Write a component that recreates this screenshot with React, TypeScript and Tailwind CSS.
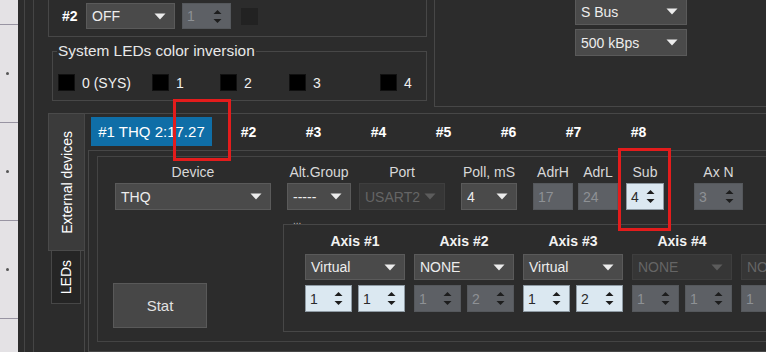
type BoxProps = { text: string; className?: string; off?: boolean };

const Tri = ({ dim }: { dim?: boolean }) => (
  <svg width="12" height="7" viewBox="0 0 12 7" className={dim ? "text-[#5c5c5c]" : "text-[#ececec]"}>
    <path d="M0.5 0.5h11L6 6.5z" fill="currentColor" />
  </svg>
);

// combo box with a down triangle
const Combo = ({ text, className = "", off }: BoxProps) => (
  <div
    className={`flex shrink-0 items-center justify-between overflow-hidden whitespace-nowrap border pl-[5px] pr-[8px] ${
      off ? "border-[#3e3e3e] bg-[#363636] text-[#656565]" : "border-[#5a5a5a] bg-[#4a4a4a] text-[#ededed]"
    } ${className}`}
  >
    <span>{text}</span>
    <Tri dim={off} />
  </div>
);

// spin box, light when enabled
const Spin = ({ text, className = "", off }: BoxProps) => (
  <div
    className={`flex shrink-0 items-center justify-between border pl-[4px] pr-[8px] ${
      off ? "border-[#55585c] bg-[#5d6065] text-[#8e9195]" : "border-[#8f9ba4] bg-[#dbe8f1] text-[#2b2b2b]"
    } ${className}`}
  >
    <span>{text}</span>
    <svg width="9" height="15" viewBox="0 0 9 15">
      <path d="M4.5 1L8.5 5H0.5z M0.5 10H8.5L4.5 14z" fill="#1d1d1d" />
    </svg>
  </div>
);

const Field = ({ label, children }: { label: string; children: React.ReactNode }) => (
  <div className="flex flex-col items-center">
    <span className="h-[16px] whitespace-nowrap text-[#d8d8d8]">{label}</span>
    <div className="mt-[3px]">{children}</div>
  </div>
);

const leds: [string, string][] = [
  ["0 (SYS)", "w-[94px]"],
  ["1", "w-[68px]"],
  ["2", "w-[69px]"],
  ["3", "w-[91px]"],
  ["4", ""],
];

const axes = [
  { name: "Axis #1", sel: "Virtual", a: "1", b: "1", on: true },
  { name: "Axis #2", sel: "NONE", a: "1", b: "2", on: false },
  { name: "Axis #3", sel: "Virtual", a: "1", b: "2", on: true },
  { name: "Axis #4", sel: "NONE", a: "1", b: "1", on: false, dis: true },
  { name: "Axis #5", sel: "NONE", a: "1", b: "1", on: false, dis: true },
];

export default function App() {
  return (
    <div className="relative flex h-[352px] w-[766px] overflow-hidden bg-[#2c2c2c] font-['Liberation_Sans',Arial,sans-serif] text-[14px] leading-[16px] text-[#e6e6e6]">
      {/* strip of the window behind */}
      <div className="flex w-[18px] shrink-0 flex-col bg-[#e4e2e5]">
        <div className="h-[25px] shrink-0 border-b border-[#9894a2]" />
        {[0, 1, 2].map((i) => (
          <div key={i} className="flex h-[98px] shrink-0 items-center border-b border-[#9894a2] pl-[6px]">
            <div className="size-[3px] rounded-full bg-[#555]" />
          </div>
        ))}
      </div>

      <div className="ml-[6px] flex flex-1 border-l border-[#454545] pl-[8px]">
        <div className="flex flex-1 flex-col border-l border-[#454545] pl-[14px]">
          {/* top groups */}
          <div className="flex h-[107px] shrink-0 items-start">
            <div className="w-[379px] shrink-0">
              <div className="h-[37px] border-x border-b border-[#474747] pl-[13px] pt-[3px]">
                <div className="flex h-[26px] items-center">
                  <span className="w-[24px] font-bold text-white">#2</span>
                  <Combo text="OFF" className="h-[26px] w-[89px]" />
                  <Spin text="1" off className="ml-[7px] h-[26px] w-[49px]" />
                  <div className="ml-[10px] size-[17px] bg-[#222]" />
                </div>
              </div>
              <fieldset className="ml-[4px] mt-[6px] border border-[#474747] pb-[9px] pl-[5px]">
                <legend className="-ml-[1px] px-[1px] text-[15.4px] leading-[16px] text-[#e8e8e8]">
                  System LEDs color inversion
                </legend>
                <div className="flex items-center pt-[15px]">
                  {leds.map(([t, w]) => (
                    <div key={t} className={`flex items-center gap-[7px] ${w}`}>
                      <div className="size-[17px] border border-[#111] bg-black" />
                      <span className="text-[#f0f0f0]">{t}</span>
                    </div>
                  ))}
                </div>
              </fieldset>
            </div>
            <div className="ml-[7px] h-[107px] flex-1 border-b border-l border-[#474747] pl-[140px]">
              <div className="-mt-[2px] flex w-[112px] flex-col gap-[4px]">
                <Combo text="S Bus" className="h-[27px] w-[112px]" />
                <Combo text="500 kBps" className="h-[27px] w-[112px]" />
              </div>
            </div>
          </div>

          {/* tab widget */}
          <div className="mt-[6px] flex flex-1">
            <div className="flex w-[36px] shrink-0 flex-col">
              <div className="flex h-[138px] items-center justify-center border border-r-0 border-[#4a4a4a] bg-[#3b3b3b]">
                <span className="rotate-180 whitespace-nowrap text-white [writing-mode:vertical-rl]">External devices</span>
              </div>
              <div className="mx-[3px] flex h-[53px] items-center justify-center border border-t-0 border-[#474747] bg-[#252525]">
                <span className="rotate-180 whitespace-nowrap text-white [writing-mode:vertical-rl]">LEDs</span>
              </div>
            </div>

            <div className="flex flex-1 flex-col border-l border-t border-[#474747] pl-[3px] pt-[3px]">
              <div className="ml-[3px] flex h-[29px] items-center">
                <div className="flex h-[29px] w-[121px] items-center justify-center bg-[#0f6ea7] text-[15px] text-white">
                  #1 THQ 2:17.27
                </div>
                <div className="ml-[4px] flex">
                  {["#2", "#3", "#4", "#5", "#6", "#7", "#8"].map((t) => (
                    <div key={t} className="w-[65px] text-center font-bold text-white">
                      {t}
                    </div>
                  ))}
                </div>
              </div>

              <div className="mt-[4px] flex flex-1 flex-col border-b border-l border-t border-[#474747] pb-[9px] pl-[8px] pt-[5px]">
                <div className="flex flex-1 flex-col border border-[#444]">
                  <div className="flex items-start pl-[17px] pt-[7px]">
                    <Field label="Device">
                      <Combo text="THQ" className="h-[27px] w-[156px]" />
                    </Field>
                    <div className="ml-[16px]">
                      <Field label="Alt.Group">
                        <Combo text="-----" className="h-[27px] w-[64px]" />
                      </Field>
                    </div>
                    <div className="ml-[8px]">
                      <Field label="Port">
                        <Combo text="USART2" off className="h-[27px] w-[86px]" />
                      </Field>
                    </div>
                    <div className="ml-[16px]">
                      <Field label="Poll, mS">
                        <Combo text="4" className="h-[27px] w-[56px]" />
                      </Field>
                    </div>
                    <div className="ml-[16px]">
                      <Field label="AdrH">
                        <div className="flex h-[27px] w-[40px] items-center border border-[#55585c] bg-[#5d6065] pl-[4px] text-[#8e9195]">17</div>
                      </Field>
                    </div>
                    <div className="ml-[5px]">
                      <Field label="AdrL">
                        <div className="flex h-[27px] w-[40px] items-center border border-[#55585c] bg-[#5d6065] pl-[4px] text-[#8e9195]">24</div>
                      </Field>
                    </div>
                    <div className="ml-[8px]">
                      <Field label="Sub">
                        <Spin text="4" className="h-[27px] w-[38px] pr-[6px]" />
                      </Field>
                    </div>
                    <div className="ml-[30px]">
                      <Field label="Ax N">
                        <Spin text="3" off className="h-[27px] w-[49px]" />
                      </Field>
                    </div>
                  </div>

                  <div className="mt-[4px] flex items-start pl-[15px]">
                    <button className="mt-[69px] flex h-[45px] w-[94px] shrink-0 items-center justify-center border border-[#595959] bg-[#474747] text-[15px] text-[#e2e2e2]">
                      Stat
                    </button>
                    <div className="ml-[76px] flex shrink-0 flex-col">
                      <div className="h-[10px] pl-[10px] text-[10px] leading-[14px] text-[#b5b5b5]">...</div>
                      <div className="flex h-[108px] w-[620px] gap-[9px] border border-[#474747] pl-[21px] pt-[8px]">
                        {axes.map((ax) => (
                          <div key={ax.name} className="flex w-[100px] shrink-0 flex-col">
                            <span className="h-[16px] text-center font-bold text-[#f2f2f2]">{ax.name}</span>
                            <Combo text={ax.sel} off={ax.dis} className="mt-[5px] h-[26px] w-[100px]" />
                            <div className="mt-[5px] flex gap-[6px]">
                              <Spin text={ax.a} off={!ax.on} className="h-[27px] w-[47px]" />
                              <Spin text={ax.b} off={!ax.on} className="h-[27px] w-[47px]" />
                            </div>
                          </div>
                        ))}
                      </div>
                    </div>
                  </div>
                </div>
              </div>
            </div>
          </div>
        </div>
      </div>

      {/* red markers drawn over the screenshot */}
      <div className="absolute left-[173px] top-[99px] h-[62px] w-[58px] border-[3px] border-[#e31c1c]" />
      <div className="absolute left-[618px] top-[148px] h-[83px] w-[53px] border-[3px] border-[#e31c1c]" />
    </div>
  );
}
